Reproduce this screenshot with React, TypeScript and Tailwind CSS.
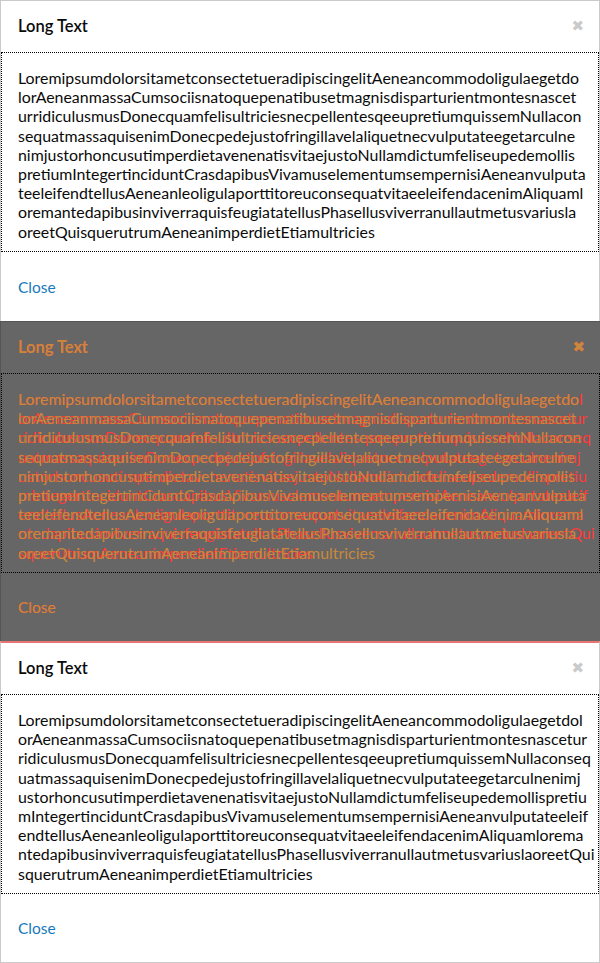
import React from "react";

const linesA = [
  "LoremipsumdolorsitametconsectetueradipiscingelitAeneancommodoligulaegetdo",
  "lorAeneanmassaCumsociisnatoquepenatibusetmagnisdisparturientmontesnascet",
  "urridiculusmusDonecquamfelisultriciesnecpellentesqeeupretiumquissemNullacon",
  "sequatmassaquisenimDonecpedejustofringillavelaliquetnecvulputateegetarculne",
  "nimjustorhoncusutimperdietavenenatisvitaejustoNullamdictumfeliseupedemollis",
  "pretiumIntegertinciduntCrasdapibusVivamuselementumsempernisiAeneanvulputa",
  "teeleifendtellusAeneanleoligulaporttitoreuconsequatvitaeeleifendacenimAliquaml",
  "oremantedapibusinviverraquisfeugiatatellusPhasellusviverranullautmetusvariusla",
  "oreetQuisquerutrumAeneanimperdietEtiamultricies",
];

const linesB = [
  "LoremipsumdolorsitametconsectetueradipiscingelitAeneancommodoligulaegetdol",
  "orAeneanmassaCumsociisnatoquepenatibusetmagnisdisparturientmontesnascetur",
  "ridiculusmusDonecquamfelisultriciesnecpellentesqeeupretiumquissemNullaconseq",
  "uatmassaquisenimDonecpedejustofringillavelaliquetnecvulputateegetarculnenimj",
  "ustorhoncusutimperdietavenenatisvitaejustoNullamdictumfeliseupedemollispretiu",
  "mIntegertinciduntCrasdapibusVivamuselementumsempernisiAeneanvulputateeleif",
  "endtellusAeneanleoligulaporttitoreuconsequatvitaeeleifendacenimAliquamlorema",
  "ntedapibusinviverraquisfeugiatatellusPhasellusviverranullautmetusvariuslaoreetQui",
  "squerutrumAeneanimperdietEtiamultricies",
];

type Tone = "normal" | "orange" | "red";

function ModalContent({ lines, tone }: { lines: string[]; tone: Tone }) {
  const textCls =
    tone === "normal"
      ? "text-[#0a0a0a]"
      : tone === "orange"
      ? "text-[#c9893c]"
      : "text-[#ff3a3a]";
  const linkCls =
    tone === "normal"
      ? "text-[#1779ba]"
      : tone === "orange"
      ? "text-[#c9893c]"
      : "text-[#ff3a3a]";
  const closeCls =
    tone === "normal"
      ? "text-[#cacaca]"
      : tone === "orange"
      ? "text-[#c9893c]"
      : "text-[#ff3a3a]";
  return (
    <div className="flex h-full flex-col">
      <div className="flex h-[51px] shrink-0 items-center justify-between pl-[17px] pr-[15px]">
        <span className={`text-[16.5px] font-semibold ${textCls}`}>Long Text</span>
        <span
          className={`text-[15px] leading-none ${closeCls}`}
          style={{ fontFamily: "'DejaVu Sans', sans-serif" }}
        >
          ✖
        </span>
      </div>
      <div className="shrink-0 border border-dotted border-black pb-[10px] pl-[16px] pr-[8px] pt-[15px]">
        {lines.map((l, i) => (
          <div key={i} className={`whitespace-nowrap text-[15.9px] leading-[19.2px] ${textCls}`}>
            {l}
          </div>
        ))}
      </div>
      <div className="flex flex-1 items-center pl-[17px] pt-[2px]">
        <span className={`text-[15.5px] ${linkCls}`}>Close</span>
      </div>
    </div>
  );
}

export default function App() {
  return (
    <div
      className="w-[600px] h-[963px] bg-white overflow-hidden"
      style={{ fontFamily: "Lato, 'Noto Sans', sans-serif" }}
    >
      <div className="h-[321px] border border-b-0 border-[#cacaca] bg-white">
        <ModalContent lines={linesA} tone="normal" />
      </div>
      <div className="relative h-[320px] border-l border-t border-[#555] bg-[#666666]">
        <div className="absolute inset-0">
          <ModalContent lines={linesB} tone="red" />
        </div>
        <div className="absolute inset-0">
          <ModalContent lines={linesA} tone="orange" />
        </div>
      </div>
      <div className="h-[322px] border border-t-2 border-[#cacaca] border-t-[#e87474] bg-white">
        <ModalContent lines={linesB} tone="normal" />
      </div>
    </div>
  );
}
